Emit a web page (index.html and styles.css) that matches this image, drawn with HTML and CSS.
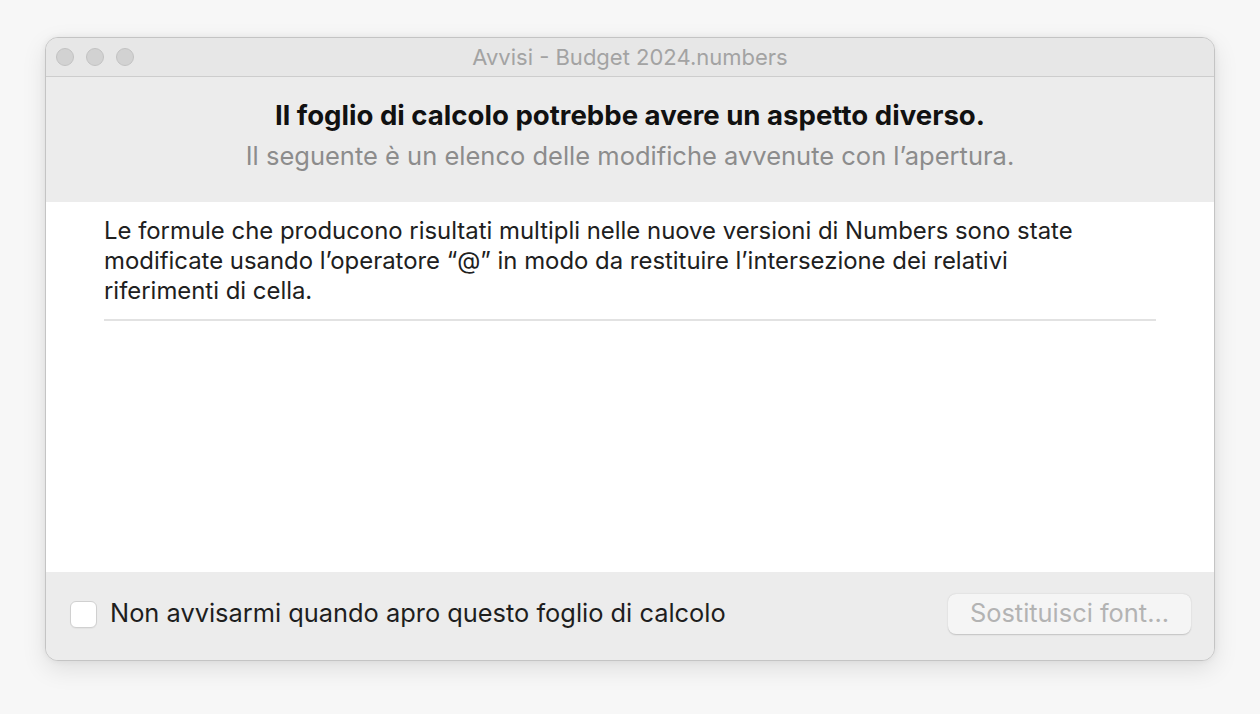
FILE: index.html
```html
<!DOCTYPE html>
<html lang="it">
<head>
<meta charset="utf-8">
<title>Avvisi - Budget 2024.numbers</title>
<link rel="stylesheet" href="styles.css">
</head>
<body>
<div class="stage">
  <div class="window">
    <div class="titlebar">
      <div class="lights">
        <span class="light"></span>
        <span class="light"></span>
        <span class="light"></span>
      </div>
      <div class="title">Avvisi - Budget 2024.numbers</div>
    </div>
    <div class="header">
      <div class="headline">Il foglio di calcolo potrebbe avere un aspetto diverso.</div>
      <div class="subline">Il seguente è un elenco delle modifiche avvenute con l’apertura.</div>
    </div>
    <div class="content">
      <div class="item">Le formule che producono risultati multipli nelle nuove versioni di Numbers sono state modificate usando l’operatore “@” in modo da restituire l’intersezione dei relativi riferimenti di cella.</div>
    </div>
    <div class="footer">
      <label class="check">
        <span class="box"></span>
        <span class="check-label">Non avvisarmi quando apro questo foglio di calcolo</span>
      </label>
      <button class="btn" disabled>Sostituisci font...</button>
    </div>
  </div>
</div>
</body>
</html>
```
FILE: styles.css
```css
* { box-sizing: border-box; }
html, body { margin: 0; padding: 0; }
body {
  width: 1260px;
  height: 714px;
  background: #f7f7f7;
  font-family: "Inter", "Noto Sans", sans-serif;
  overflow: hidden;
}
.stage {
  padding: 37px 45px 0 45px;
}
.window {
  width: 1170px;
  height: 624px;
  border: 1px solid #c4c4c4;
  border-radius: 13px;
  overflow: hidden;
  display: flex;
  flex-direction: column;
  background: #ececec;
  box-shadow: 0 8px 24px rgba(0,0,0,0.10), 0 0 6px rgba(0,0,0,0.06);
}
.titlebar {
  height: 39px;
  flex: none;
  display: flex;
  align-items: center;
  position: relative;
  background: #e7e7e7;
  border-bottom: 1px solid #cdcdcd;
}
.lights {
  display: flex;
  gap: 12px;
  padding-left: 10px;
}
.light {
  width: 18px;
  height: 18px;
  border-radius: 50%;
  background: #d2d2d2;
  border: 1px solid #c2c2c2;
}
.title {
  position: absolute;
  left: 0; right: 0; top: 0; bottom: 0;
  display: flex;
  align-items: center;
  justify-content: center;
  font-size: 22px;
  color: #a3a3a3;
}
.header {
  height: 125px;
  flex: none;
  background: #ececec;
  display: flex;
  flex-direction: column;
  align-items: center;
  padding-top: 23px;
}
.headline {
  font-size: 27.6px;
  font-weight: 700;
  color: #111;
  line-height: 30px;
  letter-spacing: 0;
}
.subline {
  margin-top: 11px;
  font-size: 25.5px;
  color: #8c8c8c;
  line-height: 30px;
}
.content {
  flex: 1;
  background: #fff;
  padding: 14px 58px 0 58px;
}
.item {
  font-size: 23.9px;
  line-height: 30px;
  color: #202020;
  padding-bottom: 13px;
  border-bottom: 2px solid #e2e2e2;
  padding-right: 70px;
}
.footer {
  height: 88px;
  flex: none;
  background: #ececec;
  display: flex;
  align-items: center;
  justify-content: space-between;
  padding: 0 23px 4px 24px;
}
.check {
  display: flex;
  align-items: center;
  gap: 13px;
}
.box {
  width: 27px;
  height: 27px;
  border-radius: 6px;
  background: #fff;
  border: 1px solid #d0d0d0;
  box-shadow: 0 1px 1px rgba(0,0,0,0.04);
}
.check-label {
  font-size: 25.4px;
  line-height: 30px;
  padding-bottom: 3px;
  color: #1e1e1e;
}
.btn {
  width: 243px;
  height: 40px;
  border-radius: 8px;
  border: none;
  background: #f5f5f5;
  box-shadow: 0 0.5px 1.5px rgba(0,0,0,0.18);
  font-family: inherit;
  font-size: 25.4px;
  line-height: 30px;
  padding: 0 0 3px 0;
  color: #b3b3b3;
}
```
